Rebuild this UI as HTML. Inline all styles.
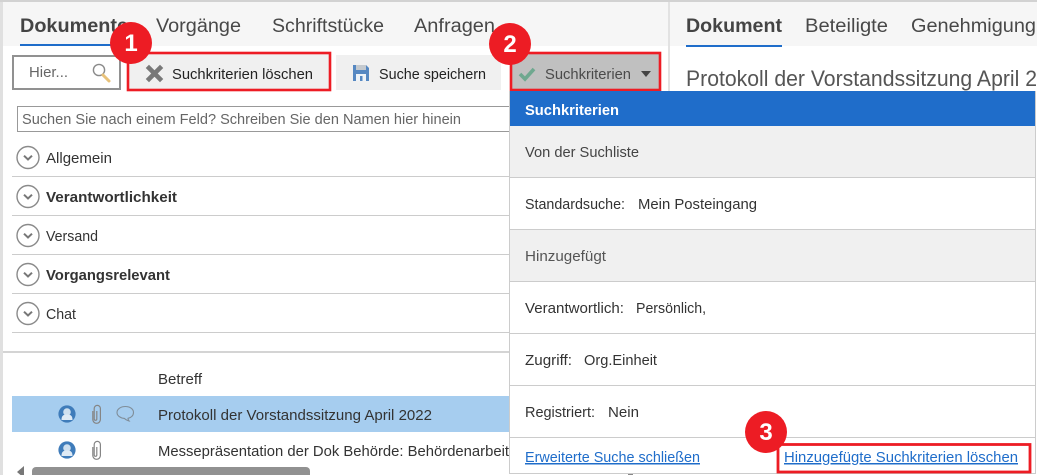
<!DOCTYPE html>
<html lang="de">
<head>
<meta charset="utf-8">
<title>Suchkriterien</title>
<style>
html,body{margin:0;padding:0;background:#fff;width:1037px;height:475px;overflow:hidden}
svg{display:block;position:absolute;left:0;top:0}
text{font-family:"Liberation Sans",sans-serif;font-size:15px;fill:#333}
.tab{font-size:19px;fill:#484848}
.tabb{font-size:19px;font-weight:bold;fill:#444}
.b{font-weight:bold;fill:#333}
.l{fill:#1f6dca;text-decoration:underline}
.badge{font-size:24px;font-weight:bold;fill:#fff;text-anchor:middle}
</style>
</head>
<body>
<svg width="1037" height="475" viewBox="0 0 1037 475">
<defs>
<g id="chev"><circle r="11" fill="#fff" stroke="#8a8a8a" stroke-width="1.4"/><path d="M-4-1.800L0 2 4-1.800" fill="none" stroke="#777" stroke-width="2"/></g>
<g id="user"><circle r="8.600" fill="#3f7cba"/><circle cy="-2" r="3.800" fill="#cfe0ef"/><path d="M-5.500 6c0-4.500 2-5.500 5.500-5.500s5.500 1 5.500 5.500z" fill="#dfeaf4"/></g>
<path id="clip" d="M-3.200 -3V5.500a3.800 3.800 0 0 0 7.600 0V-5.500a3.100 3.100 0 0 0-6.200 0V5a1.300 1.300 0 0 0 2.600 0V-3" fill="none" stroke="#858585" stroke-width="1.200"/>
</defs>

<!-- frame -->
<rect x="0" y="0" width="1037" height="2" fill="#d2d2d2"/>
<rect x="0" y="2" width="3" height="473" fill="#e0e0e0"/>
<rect x="3" y="2" width="1034" height="44" fill="#f6f6f6"/>
<rect x="668" y="2" width="2" height="90" fill="#e2e2e2"/>

<!-- tabs -->
<text class="tabb" x="20" y="32" textLength="108" lengthAdjust="spacingAndGlyphs">Dokumente</text>
<rect x="20" y="44" width="112" height="2" fill="#1f6dca"/>
<text class="tab" x="156" y="32" textLength="85" lengthAdjust="spacingAndGlyphs">Vorgänge</text>
<text class="tab" x="272" y="32" textLength="112" lengthAdjust="spacingAndGlyphs">Schriftstücke</text>
<text class="tab" x="414" y="32" textLength="81" lengthAdjust="spacingAndGlyphs">Anfragen</text>
<text class="tabb" x="686" y="32" textLength="96" lengthAdjust="spacingAndGlyphs">Dokument</text>
<rect x="686" y="45" width="96" height="2" fill="#1f6dca"/>
<text class="tab" x="805" y="32" textLength="83" lengthAdjust="spacingAndGlyphs">Beteiligte</text>
<text class="tab" x="911" y="32" textLength="125" lengthAdjust="spacingAndGlyphs">Genehmigung</text>
<text x="686" y="86" textLength="351" lengthAdjust="spacingAndGlyphs" style="font-size:22.500px;fill:#555">Protokoll der Vorstandssitzung April 2</text>

<!-- search box -->
<rect x="13" y="56" width="107" height="33" fill="#fff" stroke="#919191" stroke-width="2"/>
<text x="29" y="77" textLength="39" lengthAdjust="spacingAndGlyphs" style="fill:#666">Hier...</text>
<circle cx="99" cy="70" r="5.600" fill="#fff" stroke="#8a8a8a" stroke-width="1.400"/>
<path d="M103 75l6 6" stroke="#e8c27a" stroke-width="3" stroke-linecap="round"/>

<!-- button 1 -->
<rect x="128" y="53" width="202" height="37" fill="#f0f0f0" stroke="#ed1c24" stroke-width="2.600"/>
<path d="M149 68l11 11m0-11l-11 11" stroke="#787878" stroke-width="4.600" stroke-linecap="square"/>
<text x="172" y="79" textLength="141" lengthAdjust="spacingAndGlyphs" style="fill:#222">Suchkriterien löschen</text>

<!-- button 2 -->
<rect x="336" y="55" width="165" height="35" fill="#f0f0f0"/>
<path d="M353 65h13l3 3v13h-16z" fill="#5688c2"/>
<rect x="356" y="65" width="10" height="5" fill="#c4c9ce"/>
<rect x="356" y="74" width="10" height="7" fill="#eef3f8"/>
<rect x="360" y="76" width="2.500" height="5" fill="#5688c2"/>
<text x="379" y="79" textLength="107" lengthAdjust="spacingAndGlyphs" style="fill:#222">Suche speichern</text>

<!-- button 3 -->
<rect x="511" y="53" width="149" height="37" fill="#c0c0c0" stroke="#ed1c24" stroke-width="2.600"/>
<path d="M520 74l5 5 9-10" fill="none" stroke="#6fa88f" stroke-width="3.600"/>
<text x="545" y="79" textLength="86" lengthAdjust="spacingAndGlyphs" style="fill:#4a4a4a">Suchkriterien</text>
<path d="M641 71h10l-5 6z" fill="#444"/>

<!-- field search -->
<rect x="17.500" y="106.500" width="500" height="25" fill="#fff" stroke="#999"/>
<text x="22" y="124" textLength="439" lengthAdjust="spacingAndGlyphs" style="fill:#666">Suchen Sie nach einem Feld? Schreiben Sie den Namen hier hinein</text>

<!-- accordions -->
<use href="#chev" x="28" y="157.500"/>
<text x="46" y="163" textLength="66" lengthAdjust="spacingAndGlyphs">Allgemein</text>
<rect x="12" y="176" width="498" height="1" fill="#ccc"/>
<use href="#chev" x="28" y="196.500"/>
<text class="b" x="46" y="202" textLength="131" lengthAdjust="spacingAndGlyphs">Verantwortlichkeit</text>
<rect x="12" y="215" width="498" height="1" fill="#ccc"/>
<use href="#chev" x="28" y="235.500"/>
<text x="46" y="241" textLength="52" lengthAdjust="spacingAndGlyphs">Versand</text>
<rect x="12" y="254" width="498" height="1" fill="#ccc"/>
<use href="#chev" x="28" y="274.500"/>
<text class="b" x="46" y="280" textLength="124" lengthAdjust="spacingAndGlyphs">Vorgangsrelevant</text>
<rect x="12" y="293" width="498" height="1" fill="#ccc"/>
<use href="#chev" x="28" y="313.500"/>
<text x="46" y="319" textLength="30" lengthAdjust="spacingAndGlyphs">Chat</text>
<rect x="12" y="332" width="498" height="1" fill="#ccc"/>
<rect x="3" y="351" width="507" height="2" fill="#d4d4d4"/>

<!-- list -->
<text x="158" y="384" textLength="44" lengthAdjust="spacingAndGlyphs">Betreff</text>
<rect x="12" y="396" width="498" height="36" fill="#a6cdef"/>
<use href="#user" x="67" y="414"/>
<use href="#clip" x="96" y="414"/>
<path d="M125.500 406.500c4.500 0 8 2.400 8 6 0 3-2.500 5.400-5.500 5.800 0 .9.300 1.800 1 2.600-2-.4-3.700-1.400-4.600-2.500-4-.2-7.400-2.700-7.400-5.900 0-3.600 3.800-6 8.500-6z" fill="none" stroke="#7f8d99" stroke-width="1.100"/>
<text x="158" y="420" textLength="274" lengthAdjust="spacingAndGlyphs">Protokoll der Vorstandssitzung April 2022</text>
<use href="#user" x="67" y="450"/>
<use href="#clip" x="96" y="450"/>
<text x="158" y="456" textLength="351" lengthAdjust="spacingAndGlyphs">Messepräsentation der Dok Behörde: Behördenarbeit</text>

<!-- scrollbar -->
<path d="M24 466v12l-7-6z" fill="#777"/>
<rect x="32" y="467" width="278" height="12" rx="4" fill="#919191"/>
<rect x="628" y="474" width="5" height="1" fill="#888"/>

<!-- dropdown panel -->
<rect x="510" y="91" width="526" height="382.500" fill="#fff"/>
<rect x="510" y="91" width="526" height="35" fill="#1f6dca"/>
<rect x="510" y="126" width="526" height="51" fill="#f0f0f0"/>
<rect x="510" y="230" width="526" height="51" fill="#f0f0f0"/>
<g fill="#ccc">
<rect x="510" y="177" width="526" height="1"/>
<rect x="510" y="229" width="526" height="1"/>
<rect x="510" y="281" width="526" height="1"/>
<rect x="510" y="333" width="526" height="1"/>
<rect x="510" y="385" width="526" height="1"/>
<rect x="510" y="437" width="526" height="1"/>
<rect x="510" y="473" width="526" height="1"/>
<rect x="509" y="91" width="1" height="383"/>
<rect x="1035" y="91" width="1" height="383"/>
</g>
<text x="525" y="115" textLength="94" lengthAdjust="spacingAndGlyphs" style="fill:#fff;font-weight:bold">Suchkriterien</text>
<text x="525" y="157" textLength="114" lengthAdjust="spacingAndGlyphs" style="fill:#444">Von der Suchliste</text>
<text x="525" y="209" textLength="100" lengthAdjust="spacingAndGlyphs">Standardsuche:</text>
<text x="638" y="209" textLength="119" lengthAdjust="spacingAndGlyphs">Mein Posteingang</text>
<text x="525" y="261" textLength="81" lengthAdjust="spacingAndGlyphs" style="fill:#555">Hinzugefügt</text>
<text x="525" y="313" textLength="99" lengthAdjust="spacingAndGlyphs">Verantwortlich:</text>
<text x="636" y="313" textLength="70" lengthAdjust="spacingAndGlyphs">Persönlich,</text>
<text x="525" y="365" textLength="47" lengthAdjust="spacingAndGlyphs">Zugriff:</text>
<text x="584" y="365" textLength="73" lengthAdjust="spacingAndGlyphs">Org.Einheit</text>
<text x="525" y="417" textLength="70" lengthAdjust="spacingAndGlyphs">Registriert:</text>
<text x="608" y="417" textLength="31" lengthAdjust="spacingAndGlyphs">Nein</text>
<text class="l" x="525" y="462" textLength="175" lengthAdjust="spacingAndGlyphs">Erweiterte Suche schließen</text>
<text class="l" x="784" y="462" textLength="234" lengthAdjust="spacingAndGlyphs">Hinzugefügte Suchkriterien löschen</text>
<rect x="778" y="444.500" width="252" height="27.500" fill="none" stroke="#ed1c24" stroke-width="2.800"/>

<!-- badges -->
<circle cx="131" cy="43" r="21" fill="#ed1c24"/>
<text class="badge" x="131" y="51">1</text>
<circle cx="510" cy="44" r="21" fill="#ed1c24"/>
<text class="badge" x="510" y="52">2</text>
<circle cx="766" cy="432" r="21" fill="#ed1c24"/>
<text class="badge" x="766" y="440">3</text>
</svg>
</body>
</html>
